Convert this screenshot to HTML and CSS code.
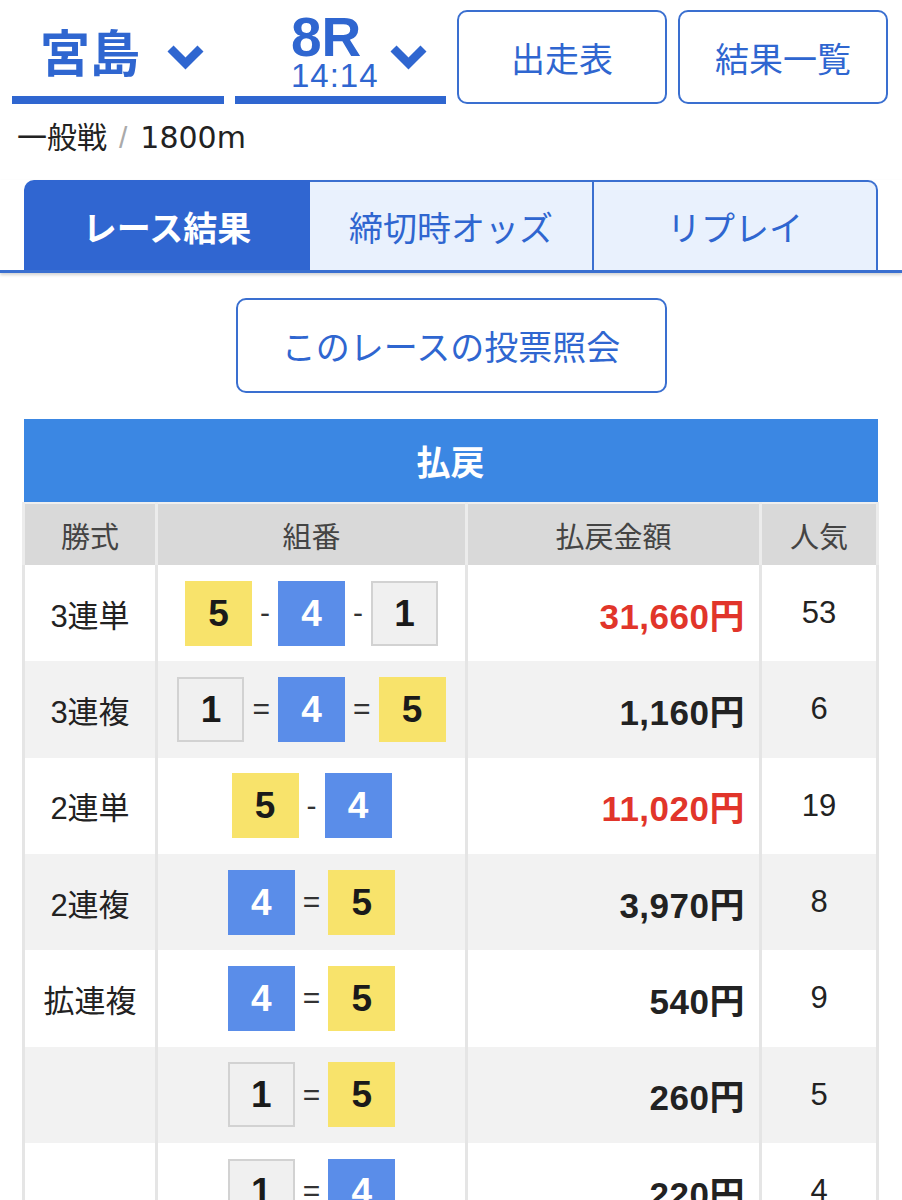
FILE: index.html
```html
<!DOCTYPE html>
<html lang="ja">
<head>
<meta charset="utf-8">
<title>宮島 8R レース結果</title>
<link rel="stylesheet" href="styles.css">
</head>
<body>
<div class="top">
  <div class="select select-place">
    <span class="place">宮島</span>
    <svg class="chev" width="37" height="25" viewBox="0 0 37 25"><path d="M3.5 3.5 L18.5 18.5 L33.5 3.5" fill="none" stroke="#2f66d0" stroke-width="8.5"/></svg>
  </div>
  <div class="select select-race">
    <div class="race">
      <span class="race-no">8R</span>
      <span class="race-time">14:14</span>
    </div>
    <svg class="chev" width="37" height="25" viewBox="0 0 37 25"><path d="M3.5 3.5 L18.5 18.5 L33.5 3.5" fill="none" stroke="#2f66d0" stroke-width="8.5"/></svg>
  </div>
  <div class="btn">出走表</div>
  <div class="btn">結果一覧</div>
</div>
<div class="sub">一般戦<span class="slash">/</span><span class="dist">1800m</span></div>
<div class="tabbar">
  <div class="tabs">
    <div class="tab active">レース結果</div>
    <div class="tab">締切時オッズ</div>
    <div class="tab">リプレイ</div>
  </div>
</div>
<div class="inq-wrap"><div class="inq">このレースの投票照会</div></div>
<table class="pay">
  <colgroup><col class="c1"><col class="c2"><col class="c3"><col class="c4"></colgroup>
  <thead>
    <tr><th class="title" colspan="4">払戻</th></tr>
    <tr class="head"><th>勝式</th><th>組番</th><th>払戻金額</th><th>人気</th></tr>
  </thead>
  <tbody>
    <tr><td class="kind">3連単</td><td class="combo"><span class="bx b5">5</span><span class="sep">-</span><span class="bx b4">4</span><span class="sep">-</span><span class="bx b1">1</span></td><td class="amt red">31,660円</td><td class="pop">53</td></tr>
    <tr class="alt"><td class="kind">3連複</td><td class="combo"><span class="bx b1">1</span><span class="sep">=</span><span class="bx b4">4</span><span class="sep">=</span><span class="bx b5">5</span></td><td class="amt">1,160円</td><td class="pop">6</td></tr>
    <tr><td class="kind">2連単</td><td class="combo"><span class="bx b5">5</span><span class="sep">-</span><span class="bx b4">4</span></td><td class="amt red">11,020円</td><td class="pop">19</td></tr>
    <tr class="alt"><td class="kind">2連複</td><td class="combo"><span class="bx b4">4</span><span class="sep">=</span><span class="bx b5">5</span></td><td class="amt">3,970円</td><td class="pop">8</td></tr>
    <tr><td class="kind">拡連複</td><td class="combo"><span class="bx b4">4</span><span class="sep">=</span><span class="bx b5">5</span></td><td class="amt">540円</td><td class="pop">9</td></tr>
    <tr class="alt"><td class="kind"></td><td class="combo"><span class="bx b1">1</span><span class="sep">=</span><span class="bx b5">5</span></td><td class="amt">260円</td><td class="pop">5</td></tr>
    <tr><td class="kind"></td><td class="combo"><span class="bx b1">1</span><span class="sep">=</span><span class="bx b4">4</span></td><td class="amt">220円</td><td class="pop">4</td></tr>
  </tbody>
</table>
</body>
</html>
```
FILE: styles.css
```css
html, body {
  margin: 0;
  padding: 0;
  background: #fff;
}
body {
  font-family: "Liberation Sans", "Noto Sans CJK JP", sans-serif;
  color: #222;
  width: 902px;
}
.top {
  display: grid;
  grid-template-columns: 212px 211px 210px 210px;
  column-gap: 11px;
  padding: 10px 0 0 12px;
}
.select {
  height: 94px;
  box-sizing: border-box;
  border-bottom: 8px solid #2f66d0;
  display: flex;
  align-items: center;
  color: #2f66d0;
}
.select-place {
  padding-left: 28px;
  gap: 27px;
}
.select-race {
  padding-left: 56px;
  gap: 11px;
}
.place {
  font-family: "Noto Sans CJK JP", sans-serif;
  font-weight: 700;
  font-size: 50px;
  line-height: 60px;
  margin-top: -6px;
}
.chev {
  margin-top: 8px;
  flex: none;
}
.race {
  display: flex;
  flex-direction: column;
  align-items: flex-start;
}
.race-no {
  font-weight: 700;
  font-size: 55px;
  line-height: 46px;
  margin-top: -2px;
}
.race-time {
  font-size: 33px;
  line-height: 30px;
  letter-spacing: 1px;
  margin-top: 1px;
}
.btn {
  height: 94px;
  box-sizing: border-box;
  border: 2px solid #3a6fd0;
  border-radius: 10px;
  display: flex;
  align-items: center;
  justify-content: center;
  color: #2f66d0;
  font-family: "Noto Sans CJK JP", sans-serif;
  font-size: 34px;
}
.sub {
  margin-top: 12px;
  padding-left: 17px;
  font-size: 30px;
  line-height: 44px;
  color: #222;
}
.slash {
  color: #aaa;
  margin: 0 13px 0 12px;
}
.dist {
  font-family: "DejaVu Sans", sans-serif;
  font-size: 30px;
}
.tabbar {
  margin-top: 20px;
  padding: 0 24px;
  border-bottom: 3px solid #3a6fd0;
  box-shadow: 0 2px 3px rgba(0, 0, 0, 0.18);
}
.tabs {
  display: flex;
  height: 90px;
}
.tab {
  flex: 1;
  box-sizing: border-box;
  display: flex;
  align-items: center;
  justify-content: center;
  background: #e9f1fd;
  color: #2f66d0;
  font-family: "Noto Sans CJK JP", sans-serif;
  font-size: 34px;
  border-top: 2px solid #3a6fd0;
  border-right: 2px solid #3a6fd0;
}
.tab:first-child {
  border-left: 2px solid #3a6fd0;
  border-top-left-radius: 10px;
}
.tab:last-child {
  border-top-right-radius: 10px;
}
.tab.active {
  background: #3066d1;
  color: #fff;
  font-weight: 700;
  border-color: #3066d1;
}
.inq-wrap {
  display: flex;
  justify-content: center;
  margin-top: 25px;
}
.inq {
  width: 431px;
  height: 95px;
  box-sizing: border-box;
  border: 2px solid #3a6fd0;
  border-radius: 10px;
  display: flex;
  align-items: center;
  justify-content: center;
  color: #2f66d0;
  font-family: "Noto Sans CJK JP", sans-serif;
  font-size: 34px;
}
.pay {
  margin: 26px 0 0 22px;
  width: 854px;
  border-collapse: collapse;
  table-layout: fixed;
}
.c1 { width: 133px; }
.c2 { width: 310px; }
.c3 { width: 294px; }
.c4 { width: 117px; }
.pay th, .pay td {
  padding: 0;
}
.title {
  height: 83px;
  background: #3b87e3;
  color: #fff;
  font-family: "Noto Sans CJK JP", sans-serif;
  font-weight: 700;
  font-size: 34px;
  text-align: center;
}
.head th {
  height: 61px;
  background: #d9d9d9;
  color: #444;
  font-family: "Noto Sans CJK JP", sans-serif;
  font-weight: 400;
  font-size: 29px;
  border-top: 2px solid #efefef;
  border-left: 3px solid #ececec;
  border-right: 3px solid #ececec;
}
.pay tbody td {
  height: 96.33px;
  border-left: 3px solid #e5e5e5;
  border-right: 3px solid #e5e5e5;
  background: #fff;
}
.pay tbody tr.alt td {
  background: #f2f2f2;
}
.kind {
  text-align: center;
  font-size: 31px;
  color: #222;
}
.combo {
  text-align: center;
  white-space: nowrap;
}
.bx {
  display: inline-block;
  vertical-align: middle;
  width: 67px;
  height: 65px;
  line-height: 65px;
  box-sizing: border-box;
  text-align: center;
  font-weight: 700;
  font-size: 37px;
}
.b1 {
  background: #f0f0f0;
  border: 2px solid #d2d2d2;
  line-height: 61px;
  color: #1a1a1a;
}
.b4 {
  background: #5a8de9;
  color: #fff;
}
.b5 {
  background: #f8e36b;
  color: #1a1a1a;
}
.sep {
  display: inline-block;
  vertical-align: middle;
  padding: 0 8px;
  font-size: 30px;
  color: #333;
}
.amt {
  text-align: right;
  padding-right: 14px !important;
  font-weight: 700;
  font-size: 35px;
  letter-spacing: 0.5px;
  color: #222;
}
.amt.red {
  color: #e1352a;
}
.pop {
  text-align: center;
  font-size: 31px;
  color: #222;
}
```
